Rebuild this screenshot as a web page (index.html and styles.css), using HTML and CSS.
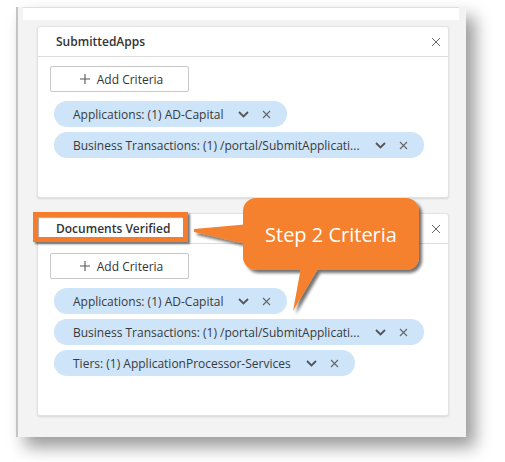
FILE: index.html
```html
<!DOCTYPE html>
<html>
<head>
<meta charset="utf-8">
<link rel="stylesheet" href="styles.css">
</head>
<body>
<div class="page">
  <div class="panel">
    <div class="topstrip"></div>

    <div class="card">
      <div class="card-head">
        <span class="title">SubmittedApps</span>
        <svg class="close" width="10" height="10" viewBox="0 0 10 10"><path d="M1 1L9 9M9 1L1 9"/></svg>
      </div>
      <div class="card-body">
        <button class="add"><svg class="plus" width="10" height="10" viewBox="0 0 10 10"><path d="M5 0V10M0 5H10"/></svg><span>Add Criteria</span></button>
        <div class="chips">
          <div class="chip"><span class="chip-text">Applications: (1) AD-Capital</span><svg class="chev" width="11" height="7" viewBox="0 0 11 7"><path d="M1 1L5.5 5.5L10 1"/></svg><svg class="x" width="9" height="9" viewBox="0 0 9 9"><path d="M1 1L8 8M8 1L1 8"/></svg></div>
          <div class="chip"><span class="chip-text">Business Transactions: (1) /portal/SubmitApplicati...</span><svg class="chev" width="11" height="7" viewBox="0 0 11 7"><path d="M1 1L5.5 5.5L10 1"/></svg><svg class="x" width="9" height="9" viewBox="0 0 9 9"><path d="M1 1L8 8M8 1L1 8"/></svg></div>
        </div>
      </div>
    </div>

    <div class="card card-second">
      <div class="card-head">
        <span class="title">Documents Verified</span>
        <svg class="close" width="10" height="10" viewBox="0 0 10 10"><path d="M1 1L9 9M9 1L1 9"/></svg>
      </div>
      <div class="highlight"></div>
      <div class="card-body">
        <button class="add"><svg class="plus" width="10" height="10" viewBox="0 0 10 10"><path d="M5 0V10M0 5H10"/></svg><span>Add Criteria</span></button>
        <div class="chips">
          <div class="chip"><span class="chip-text">Applications: (1) AD-Capital</span><svg class="chev" width="11" height="7" viewBox="0 0 11 7"><path d="M1 1L5.5 5.5L10 1"/></svg><svg class="x" width="9" height="9" viewBox="0 0 9 9"><path d="M1 1L8 8M8 1L1 8"/></svg></div>
          <div class="chip"><span class="chip-text">Business Transactions: (1) /portal/SubmitApplicati...</span><svg class="chev" width="11" height="7" viewBox="0 0 11 7"><path d="M1 1L5.5 5.5L10 1"/></svg><svg class="x" width="9" height="9" viewBox="0 0 9 9"><path d="M1 1L8 8M8 1L1 8"/></svg></div>
          <div class="chip"><span class="chip-text">Tiers: (1) ApplicationProcessor-Services</span><svg class="chev" width="11" height="7" viewBox="0 0 11 7"><path d="M1 1L5.5 5.5L10 1"/></svg><svg class="x" width="9" height="9" viewBox="0 0 9 9"><path d="M1 1L8 8M8 1L1 8"/></svg></div>
        </div>
      </div>
    </div>
  </div>

  <svg class="callout-shape" width="505" height="462" viewBox="0 0 505 462">
    <defs>
      <filter id="sh" x="-20%" y="-20%" width="140%" height="140%">
        <feDropShadow dx="3" dy="3" stdDeviation="1.6" flood-color="#000" flood-opacity="0.55"/>
      </filter>
    </defs>
    <g filter="url(#sh)" fill="#f5812f">
      <rect x="243" y="198" width="176" height="72" rx="13" ry="13"/>
      <polygon points="250,224 194,229 194,232 250,245"/>
      <polygon points="302,262 322,262 293,311"/>
    </g>
  </svg>
  <div class="callout-text">Step 2 Criteria</div>
</div>
</body>
</html>
```

FILE: styles.css
```css
* { box-sizing: border-box; }
html, body { margin: 0; padding: 0; background: #fff; }
body { font-family: "Open Sans", "Liberation Sans", sans-serif; color: #333; }

.page {
  position: relative;
  width: 505px;
  height: 462px;
  overflow: hidden;
}

.panel {
  margin-left: 16px;
  width: 450px;
  height: 430px;
  background: #f3f3f3;
  border-left: 2px solid #c4c4c4;
  padding: 0 17px 14px 19px;
  box-shadow: 9px 10px 16px rgba(0,0,0,0.4);
}

.topstrip {
  margin: 7px -10px 0 -14px;
  height: 13px;
  background: #fff;
  border-top: 1px solid #dedede;
}

.card {
  position: relative;
  margin-top: 6px;
  background: #fff;
  border: 1px solid #e2e2e2;
  border-radius: 3px;
  box-shadow: 0 1px 2px rgba(0,0,0,0.12);
}
.card-second { margin-top: 15px; }

.card-head {
  height: 30px;
  border-bottom: 1px solid #dcdcdc;
  display: flex;
  align-items: center;
  justify-content: space-between;
  padding: 0 7px 0 18px;
}
.title {
  font-size: 12px;
  font-weight: 600;
  color: #333;
}
.close path { stroke: #666; stroke-width: 1; fill: none; }

.card-body {
  padding: 9px 13px 39px 12px;
}

.add {
  width: 139px;
  height: 26px;
  border: 1px solid #c9c9c9;
  border-radius: 2px;
  background: #fff;
  font-family: "Open Sans", "Liberation Sans", sans-serif;
  font-size: 12px;
  color: #333;
  display: flex;
  align-items: center;
  justify-content: center;
  gap: 7px;
  padding: 0 0 0 4px;
  margin: 0;
}
.plus path { stroke: #555; stroke-width: 1.1; fill: none; }

.chips {
  margin-top: 9px;
  margin-left: 4px;
  display: flex;
  flex-direction: column;
  align-items: flex-start;
  gap: 5px;
}

.chip {
  height: 26px;
  border-radius: 13px;
  background: #cde4f9;
  display: flex;
  align-items: center;
  padding: 0 16px 0 19px;
  font-size: 12px;
  color: #3a3a3a;
  white-space: nowrap;
}
.chev { margin-left: 15px; }
.chev path { stroke: #555; stroke-width: 1.8; fill: none; }
.x { margin-left: 13px; }
.x path { stroke: #666; stroke-width: 1.1; fill: none; }

.highlight {
  position: absolute;
  left: -5px;
  top: -2px;
  width: 155px;
  height: 30px;
  border: 5px solid #f47c2c;
  box-shadow: inset 1px 1px 1px rgba(0,0,0,0.35), 2px 2px 2px rgba(0,0,0,0.55);
  pointer-events: none;
}

.callout-shape {
  position: absolute;
  left: 0;
  top: 0;
  pointer-events: none;
}
.callout-text {
  position: absolute;
  left: 243px;
  top: 198px;
  width: 176px;
  height: 72px;
  display: flex;
  align-items: center;
  justify-content: center;
  color: #fff;
  font-size: 20px;
  font-weight: 500;
}
```
